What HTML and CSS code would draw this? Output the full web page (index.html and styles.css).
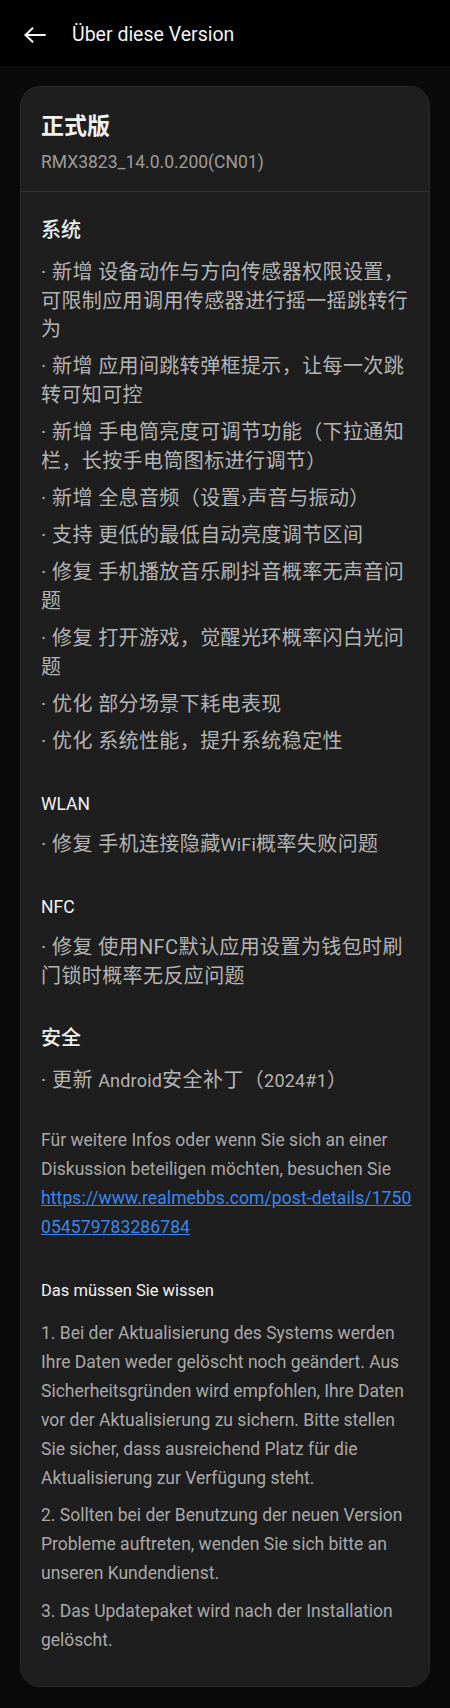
FILE: index.html
```html
<!DOCTYPE html>
<html lang="de">
<head>
<meta charset="utf-8">
<title>Über diese Version</title>
<link rel="stylesheet" href="styles.css">
</head>
<body>
<header class="topbar">
  <button class="back" aria-label="Zurück">
    <svg width="22" height="16" viewBox="0 0 22 16" fill="none" stroke="currentColor" stroke-width="2" stroke-linecap="round" stroke-linejoin="round"><path d="M21 8H1.5"/><path d="M8.5 1.2L1.5 8l7 6.8"/></svg>
  </button>
  <h1 class="page-title">Über diese Version</h1>
</header>
<main class="page">
  <section class="card">
    <div class="card-head">
      <h2 class="release">正式版</h2>
      <p class="build">RMX3823_14.0.0.200(CN01)</p>
    </div>
    <div class="card-body">
      <section class="group">
        <h3 class="group-title">系统</h3>
        <ul class="changes">
          <li>· 新增 设备动作与方向传感器权限设置，可限制应用调用传感器进行摇一摇跳转行为</li>
          <li>· 新增 应用间跳转弹框提示，让每一次跳转可知可控</li>
          <li>· 新增 手电筒亮度可调节功能（下拉通知栏，长按手电筒图标进行调节）</li>
          <li>· 新增 全息音频（设置›声音与振动）</li>
          <li>· 支持 更低的最低自动亮度调节区间</li>
          <li>· 修复 手机播放音乐刷抖音概率无声音问题</li>
          <li>· 修复 打开游戏，觉醒光环概率闪白光问题</li>
          <li>· 优化 部分场景下耗电表现</li>
          <li>· 优化 系统性能，提升系统稳定性</li>
        </ul>
      </section>
      <section class="group">
        <h3 class="group-title latin">WLAN</h3>
        <ul class="changes">
          <li>· 修复 手机连接隐藏<span class="lat">WiFi</span>概率失败问题</li>
        </ul>
      </section>
      <section class="group">
        <h3 class="group-title latin">NFC</h3>
        <ul class="changes">
          <li>· 修复 使用NFC默认应用设置为钱包时刷门锁时概率无反应问题</li>
        </ul>
      </section>
      <section class="group">
        <h3 class="group-title">安全</h3>
        <ul class="changes">
          <li>· 更新 <span class="lat">Android</span>安全补丁（<span class="lat">2024#1</span>）</li>
        </ul>
      </section>
      <p class="more">Für weitere Infos oder wenn Sie sich an einer Diskussion beteiligen möchten, besuchen Sie <a class="link" href="#"><span class="link-line">https://www.realmebbs.com/post-details/1750</span><span class="link-line">054579783286784</span></a></p>
      <section class="notice">
        <h3 class="notice-title">Das müssen Sie wissen</h3>
        <p>1. Bei der Aktualisierung des Systems werden Ihre Daten weder gelöscht noch geändert. Aus Sicherheitsgründen wird empfohlen, Ihre Daten vor der Aktualisierung zu sichern. Bitte stellen Sie sicher, dass ausreichend Platz für die Aktualisierung zur Verfügung steht.</p>
        <p>2. Sollten bei der Benutzung der neuen Version Probleme auftreten, wenden Sie sich bitte an unseren Kundendienst.</p>
        <p>3. Das Updatepaket wird nach der Installation gelöscht.</p>
      </section>
    </div>
  </section>
</main>
</body>
</html>
```
FILE: styles.css
```css
* {
  box-sizing: border-box;
  margin: 0;
  padding: 0;
}

html, body {
  background: #0a0a0a;
}

body {
  font-family: Roboto, "Noto Sans CJK SC", sans-serif;
  color: #aaaaaa;
}

.topbar {
  height: 66px;
  background: #000000;
  display: flex;
  align-items: center;
  gap: 26px;
  padding: 3px 0 0 24px;
}

.back {
  display: flex;
  width: 22px;
  height: 16px;
  background: none;
  border: 0;
  color: #f4f4f4;
}

.page-title {
  font-size: 19.5px;
  line-height: 28px;
  font-weight: 400;
  color: #f2f2f2;
}

.page {
  padding: 20px 20px 23px;
}

.card {
  background: #1e1e1e;
  border: 1px solid #282828;
  border-radius: 20px;
}

.card-head {
  padding: 24px 19px 17px 20px;
  border-bottom: 1px solid #323232;
}

.release {
  font-size: 23px;
  line-height: 32px;
  font-weight: 700;
  color: #f2f2f2;
}

.build {
  margin-top: 7px;
  font-size: 17.5px;
  line-height: 24px;
  color: #9c9c9c;
}

.card-body {
  padding: 24px 19px 31px 20px;
}

.group + .group {
  margin-top: 34px;
}

.group-title {
  font-size: 20px;
  line-height: 28px;
  font-weight: 500;
  color: #ededed;
}

.group-title.latin {
  font-size: 17.5px;
  font-weight: 400;
  color: #f2f2f2;
}

.changes {
  list-style: none;
  margin-top: 14px;
}

.group-title.latin + .changes {
  margin-top: 12px;
}

.changes li {
  font-size: 20px;
  line-height: 28.5px;
  letter-spacing: 0.4px;
  color: #b4b4b4;
}

.changes li + li {
  margin-top: 8.75px;
}

.lat {
  font-size: 18px;
  letter-spacing: 0.2px;
}

.more {
  margin-top: 30px;
  font-size: 17.5px;
  line-height: 29px;
  color: #a9a9a9;
}

.link {
  display: inline-block;
  color: #3a86f0;
  text-decoration: underline;
  letter-spacing: 0.1px;
}

.link-line {
  display: block;
  white-space: nowrap;
}

.notice {
  margin-top: 35px;
}

.notice-title {
  font-size: 16.5px;
  line-height: 28px;
  font-weight: 400;
  color: #f2f2f2;
}

.notice p {
  margin-top: 8.5px;
  font-size: 17.5px;
  line-height: 29px;
  color: #a9a9a9;
}

.notice-title + p {
  margin-top: 14px;
}
```
